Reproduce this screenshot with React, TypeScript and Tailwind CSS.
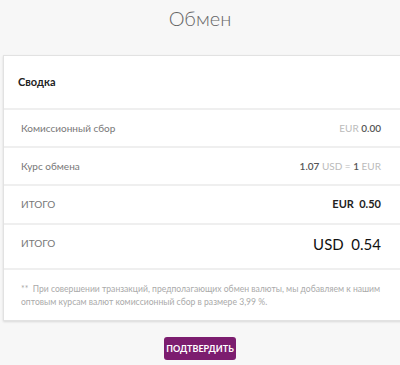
import React from "react";

export default function App() {
  return (
    <div className="w-[400px] h-[365px] overflow-hidden bg-[#f7f7f7] text-[#555]" style={{ fontFamily: "Lato, 'Open Sans', sans-serif" }}>
      <div className="h-[55px] flex justify-center pt-[3px]">
        <h1 className="text-[20px] font-light text-[#666] leading-[30px]">Обмен</h1>
      </div>
      <div className="ml-[3px] w-[400px] bg-white border border-[#e2e2e2] shadow-[0_1px_2px_rgba(0,0,0,0.12)]">
        <div className="h-[54px] flex items-center px-[14px] border-b-2 border-[#efefef]">
          <span className="text-[11px] font-bold text-[#222]">Сводка</span>
        </div>
        <div className="h-[38px] flex items-center justify-between pl-[17px] pr-[21px] border-b-2 border-[#efefef] text-[10px]">
          <span className="text-[#777]">Комиссионный сбор</span>
          <span><span className="text-[#bbb]">EUR </span><span className="text-[#555] font-semibold">0.00</span></span>
        </div>
        <div className="h-[38px] flex items-center justify-between pl-[17px] pr-[21px] border-b-2 border-[#efefef] text-[10px]">
          <span className="text-[#777]">Курс обмена</span>
          <span><span className="text-[#555] font-semibold">1.07</span><span className="text-[#bbb]"> USD = </span><span className="text-[#555] font-semibold">1</span><span className="text-[#bbb]"> EUR</span></span>
        </div>
        <div className="h-[39px] flex items-center justify-between pl-[17px] pr-[21px] border-b-2 border-[#efefef]">
          <span className="text-[10px] text-[#777]">ИТОГО</span>
          <span className="text-[11px] font-bold text-[#222]">EUR&nbsp; 0.50</span>
        </div>
        <div className="h-[45px] flex items-start justify-between pl-[17px] pr-[21px] pt-[10px] border-b-2 border-[#efefef]">
          <span className="text-[10px] text-[#777] mt-[1px]">ИТОГО</span>
          <span className="text-[15px] text-[#111] leading-[18px]">USD&nbsp; 0.54</span>
        </div>
        <div className="px-[17px] pt-[13px] pb-[11px] text-[8.6px] leading-[13px] text-[#aaa]">
          **&nbsp; При совершении транзакций, предполагающих обмен валюты, мы добавляем к нашим оптовым курсам валют комиссионный сбор в размере 3,99 %.
        </div>
      </div>
      <div className="flex justify-center mt-[16px]">
        <button className="w-[72px] h-[23px] rounded-[3px] bg-[#7c1d6f] text-white text-[9px] font-bold">ПОДТВЕРДИТЬ</button>
      </div>
    </div>
  );
}
